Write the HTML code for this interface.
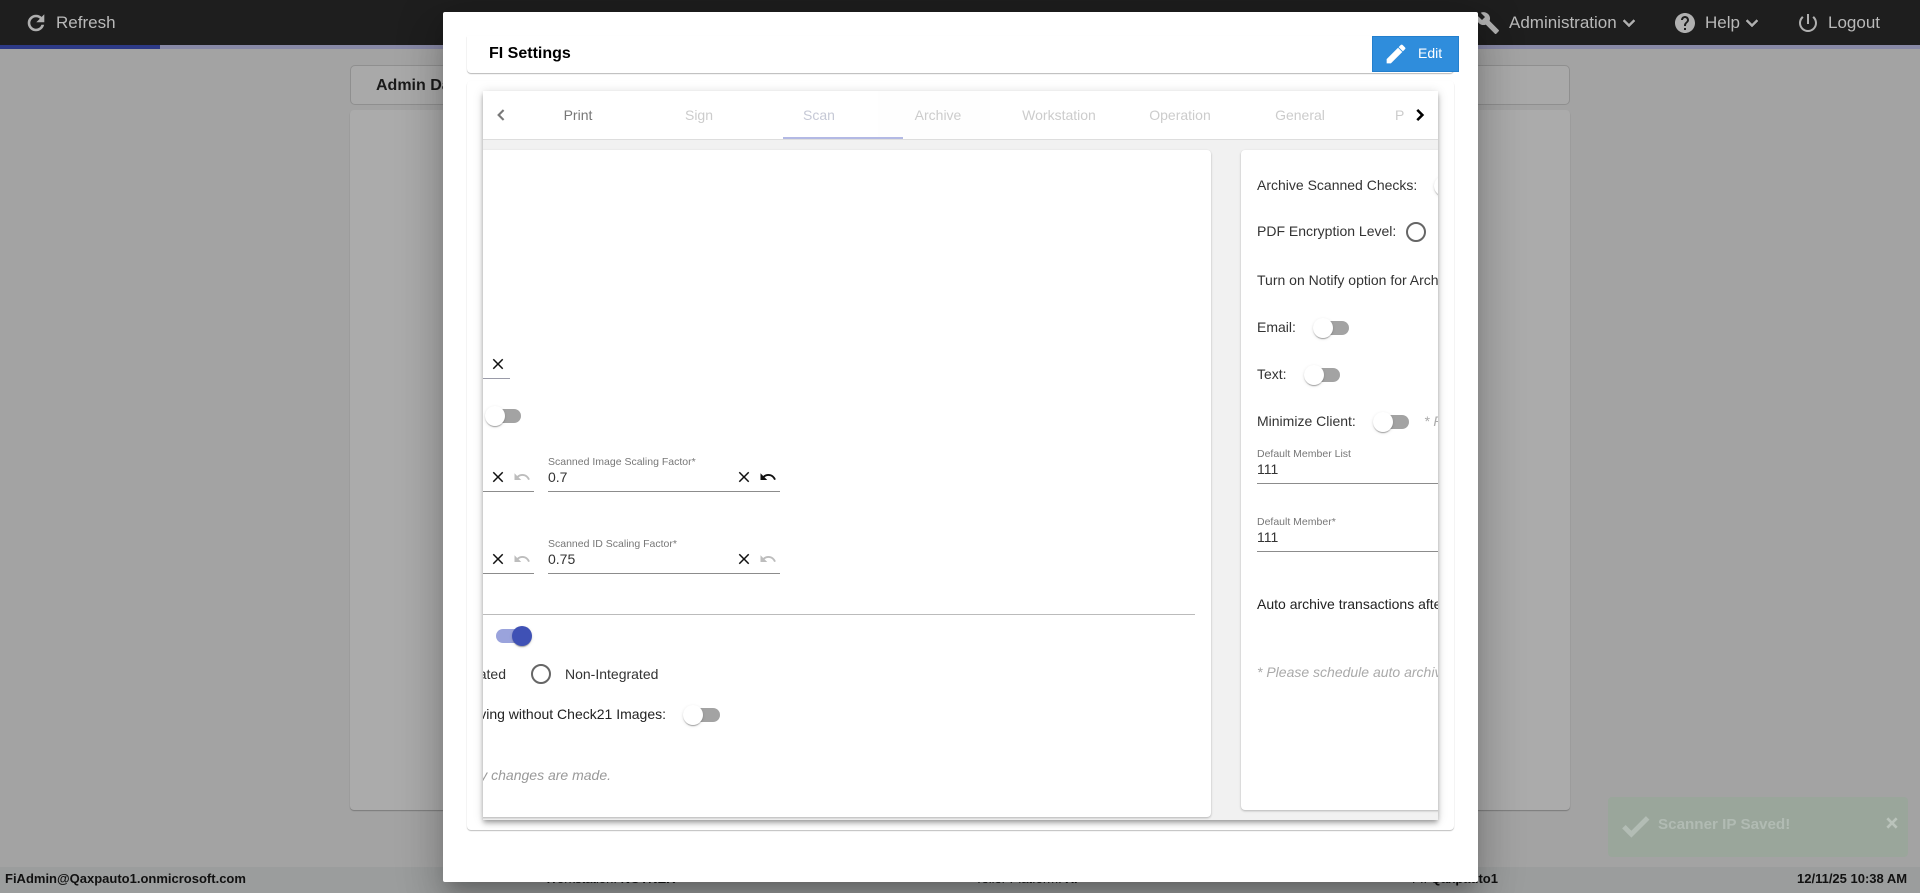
<!DOCTYPE html>
<html lang="en"><head><meta charset="utf-8"><title>FI Settings</title>
<style>
html,body{margin:0;padding:0;width:1920px;height:893px;overflow:hidden;background:#a3a3a3;font-family:"Liberation Sans",Arial,sans-serif;}
.a{position:absolute}
.t{position:absolute;white-space:nowrap;line-height:20px;font-size:14px;color:#333}
svg{position:absolute;display:block}
.tr{position:absolute;width:34px;height:14px;border-radius:7px;background:#a3a3a3}
.th{position:absolute;width:20px;height:20px;border-radius:50%;background:#fff;box-shadow:0 2px 1px -1px rgba(0,0,0,.2),0 1px 1px rgba(0,0,0,.14),0 1px 3px rgba(0,0,0,.12)}
.rd{position:absolute;width:16px;height:16px;border:2px solid #666;border-radius:50%;background:#fff}
.lb{font-size:10.5px;color:#777}
.ln{position:absolute;height:1px;background:#8c8c8c}
.tab{position:absolute;top:14px;width:120px;text-align:center;line-height:20px;font-size:14px;color:#ccc;white-space:nowrap}
.card{position:absolute;background:#fff;border-radius:4px;box-shadow:0 1px 2px rgba(0,0,0,.26),0 0 1px rgba(0,0,0,.02)}
.nav{color:#b9b9b9;font-size:17px}
.it{font-style:italic;color:#999}
.foot{font-size:13px;font-weight:bold;color:#111}
</style></head><body>

<div class="a" style="left:0;top:0;width:1920px;height:45px;background:#1e1e1e"></div>
<div class="a" style="left:0;top:45px;width:1920px;height:4px;background:#8889a6"></div>
<div class="a" style="left:0;top:45px;width:160px;height:4px;background:#2d3a87"></div>

<svg style="left:24px;top:11px" width="24" height="24" viewBox="0 0 24 24" fill="#b0b0b0" stroke="#b0b0b0" stroke-width=".6"><path d="M17.65 6.35C16.2 4.9 14.21 4 12 4c-4.42 0-7.99 3.58-7.99 8s3.57 8 7.99 8c3.73 0 6.84-2.55 7.73-6h-2.08c-.82 2.33-3.04 4-5.65 4-3.31 0-6-2.69-6-6s2.69-6 6-6c1.66 0 3.14.69 4.22 1.78L13 11h7V4l-2.35 2.35z"/></svg>
<div class="t nav" style="left:56px;top:13px">Refresh</div>

<svg style="left:1476px;top:11px" width="24" height="24" viewBox="0 0 24 24" fill="#b0b0b0"><path d="M22.7 19l-9.1-9.1c.9-2.3.4-5-1.5-6.9-2-2-5-2.4-7.4-1.3L9 6 6 9 1.6 4.7C.4 7.1.9 10.1 2.9 12.1c1.9 1.9 4.6 2.4 6.9 1.5l9.1 9.1c.4.4 1 .4 1.4 0l2.3-2.3c.5-.4.5-1.1.1-1.4z"/></svg>
<div class="t nav" style="left:1509px;top:13px">Administration</div>
<svg style="left:1617px;top:11px" width="24" height="24" viewBox="0 0 24 24" fill="#b0b0b0" stroke="#b0b0b0" stroke-width=".5"><path d="M16.59 8.59L12 13.17 7.41 8.59 6 10l6 6 6-6z"/></svg>
<svg style="left:1673px;top:11px" width="24" height="24" viewBox="0 0 24 24" fill="#b0b0b0"><path d="M12 2C6.48 2 2 6.48 2 12s4.48 10 10 10 10-4.48 10-10S17.52 2 12 2zm1 17h-2v-2h2v2zm2.07-7.75l-.9.92C13.45 12.9 13 13.5 13 15h-2v-.5c0-1.1.45-2.1 1.17-2.83l1.24-1.26c.37-.36.59-.86.59-1.41 0-1.1-.9-2-2-2s-2 .9-2 2H8c0-2.21 1.79-4 4-4s4 1.79 4 4c0 .88-.36 1.68-.93 2.25z"/></svg>
<div class="t nav" style="left:1705px;top:13px">Help</div>
<svg style="left:1740px;top:11px" width="24" height="24" viewBox="0 0 24 24" fill="#b0b0b0" stroke="#b0b0b0" stroke-width=".5"><path d="M16.59 8.59L12 13.17 7.41 8.59 6 10l6 6 6-6z"/></svg>
<svg style="left:1796px;top:11px" width="24" height="24" viewBox="0 0 24 24" fill="#b0b0b0"><path d="M13 3h-2v10h2V3zm4.83 2.17l-1.42 1.42C17.99 7.86 19 9.81 19 12c0 3.87-3.13 7-7 7s-7-3.13-7-7c0-2.19 1.01-4.14 2.58-5.42L6.17 5.17C4.23 6.82 3 9.26 3 12c0 4.97 4.03 9 9 9s9-4.03 9-9c0-2.74-1.23-5.18-3.17-6.83z"/></svg>
<div class="t nav" style="left:1828px;top:13px">Logout</div>

<!-- background cards -->
<div class="a" style="left:350px;top:65px;width:1218px;height:38px;background:#a9a9a9;border:1px solid #8f8f8f;border-radius:5px"></div>
<div class="t" style="left:376px;top:76px;font-size:16px;font-weight:bold;color:#1a1a1a">Admin Dashboard</div>
<div class="a" style="left:350px;top:110px;width:1220px;height:700px;background:#ababab;border-radius:4px;box-shadow:0 1px 1px rgba(0,0,0,.25)"></div>

<!-- toast -->
<div class="a" style="left:1608px;top:797px;width:300px;height:60px;background:#9aa69b;border-radius:4px"></div>
<svg style="left:1619px;top:810px" width="33" height="33" viewBox="0 0 24 24" fill="#b3bdb5"><path d="M9 16.17L4.83 12l-1.42 1.41L9 19 21 7l-1.41-1.41z" stroke="#b3bdb5" stroke-width="1.6"/></svg>
<div class="t" style="left:1658px;top:815px;font-size:15.2px;font-weight:bold;color:#b1bbb3">Scanner IP Saved!</div>
<svg style="left:1884px;top:815px" width="16" height="16" viewBox="0 0 24 24" fill="#bac3bb"><path d="M19 6.41L17.59 5 12 10.59 6.41 5 5 6.41 10.59 12 5 17.59 6.41 19 12 13.41 17.59 19 19 17.59 13.41 12z" stroke="#bac3bb" stroke-width="2"/></svg>

<!-- footer -->
<div class="a" style="left:0;top:867px;width:1920px;height:26px;background:#9b9d9d"></div>
<div class="t foot" style="left:5px;top:869px">FiAdmin@Qaxpauto1.onmicrosoft.com</div>
<div class="t foot" style="left:545px;top:869px"><span style="font-weight:normal">Workstation:</span> NOTNER</div>
<div class="t foot" style="left:975px;top:869px"><span style="font-weight:normal">Teller Platform:</span> XI</div>
<div class="t foot" style="left:1412px;top:869px"><span style="font-weight:normal">FI:</span> Qaxpauto1</div>
<div class="t foot" style="left:1797px;top:869px">12/11/25 10:38 AM</div>

<!-- modal -->
<div class="a" style="left:443px;top:12px;width:1035px;height:870px;background:#fff;border-radius:2px;box-shadow:0 11px 15px -7px rgba(0,0,0,.2),0 24px 38px 3px rgba(0,0,0,.14),0 9px 46px 8px rgba(0,0,0,.12)"></div>

<!-- title card -->
<div class="a" style="left:467px;top:36px;width:987px;height:37px;background:#fff;border-radius:0 0 4px 4px;box-shadow:0 1px 1px rgba(0,0,0,.28),0 0 2px rgba(0,0,0,.02)"></div>
<div class="t" style="left:489px;top:44px;font-size:16px;font-weight:bold;color:#000">FI Settings</div>
<div class="a" style="left:1372px;top:36px;width:87px;height:36px;background:#2f8ddc;box-sizing:border-box;border:1px solid #237fcd"></div>
<svg style="left:1384px;top:42px" width="24" height="24" viewBox="0 0 24 24" fill="#fff" stroke="#fff" stroke-width=".7"><path d="M3 17.25V21h3.75L17.81 9.94l-3.75-3.75L3 17.25zM20.71 7.04c.39-.39.39-1.02 0-1.41l-2.34-2.34c-.39-.39-1.02-.39-1.41 0l-1.83 1.83 3.75 3.75 1.83-1.83z"/></svg>
<div class="t" style="left:1418px;top:43px;color:#fff">Edit</div>

<!-- outer card -->
<div class="a" style="left:467px;top:81px;width:987px;height:749px;background:#fff;border-radius:4px;box-shadow:0 1px 1px rgba(0,0,0,.25),0 0 2px rgba(0,0,0,.02)"></div>

<!-- tab panel -->
<div class="a" style="left:483px;top:91px;width:955px;height:729px;background:#f1f1f1;box-shadow:0 2px 4px -1px rgba(0,0,0,.25),0 4px 5px rgba(0,0,0,.16),0 1px 10px rgba(0,0,0,.14)"></div>
<div class="a" style="left:483px;top:91px;width:955px;height:729px;overflow:hidden">
  <div class="a" style="left:0;top:0;width:955px;height:48px;background:#fff;border-bottom:1px solid #ddd"></div>
  <div class="a" style="left:395px;top:0;width:112px;height:48px;background:#fefefe"></div>
  <div class="a" style="left:300px;top:46px;width:120px;height:2px;background:#b3b9e4"></div>
  <svg style="left:7px;top:13px" width="22" height="22" viewBox="0 0 24 24" fill="#777" stroke="#777" stroke-width=".4"><path d="M15.41 7.41L14 6l-6 6 6 6 1.41-1.41L10.83 12z"/></svg>
  <div class="tab" style="left:35px;color:#777">Print</div>
  <div class="tab" style="left:156px">Sign</div>
  <div class="tab" style="left:276px;color:#c6c9d6">Scan</div>
  <div class="tab" style="left:395px">Archive</div>
  <div class="tab" style="left:516px">Workstation</div>
  <div class="tab" style="left:637px">Operation</div>
  <div class="tab" style="left:757px">General</div>
  <div class="tab" style="left:912px;width:40px;text-align:left">P</div>
  <div class="a" style="left:925px;top:0;width:30px;height:47px;background:#fff"></div>
  <svg style="left:926px;top:13px" width="22" height="22" viewBox="0 0 24 24" fill="#000"><path d="M8.59 16.59L10 18l6-6-6-6-1.41 1.41L13.17 12z" stroke="#000" stroke-width=".8"/></svg>

  <!-- page-coordinate wrapper -->
  <div class="a" style="left:-483px;top:-91px;width:1920px;height:893px">
    <!-- left card -->
    <div class="card" style="left:470px;top:150px;width:741px;height:667px"></div>

    <svg style="left:489px;top:355px" width="18" height="18" viewBox="0 0 24 24" fill="#111"><path d="M19 6.41L17.59 5 12 10.59 6.41 5 5 6.41 10.59 12 5 17.59 6.41 19 12 13.41 17.59 19 19 17.59 13.41 12z"/></svg>
    <div class="ln" style="left:470px;top:378px;width:40px;background:#9a9ba8"></div>

    <div class="tr" style="left:487px;top:409px"></div><div class="th" style="left:485px;top:406px"></div>

    <svg style="left:489px;top:468px" width="18" height="18" viewBox="0 0 24 24" fill="#111"><path d="M19 6.41L17.59 5 12 10.59 6.41 5 5 6.41 10.59 12 5 17.59 6.41 19 12 13.41 17.59 19 19 17.59 13.41 12z"/></svg>
    <svg style="left:513px;top:468px" width="18" height="18" viewBox="0 0 24 24" fill="#bdbdbd"><path d="M12.5 8c-2.65 0-5.05.99-6.9 2.6L2 7v9h9l-3.62-3.62c1.39-1.16 3.16-1.88 5.12-1.88 3.54 0 6.55 2.31 7.6 5.5l2.37-.78C21.08 11.03 17.15 8 12.5 8z"/></svg>
    <div class="ln" style="left:470px;top:491px;width:64px"></div>

    <div class="t lb" style="left:548px;top:452px">Scanned Image Scaling Factor*</div>
    <div class="t" style="left:548px;top:467px">0.7</div>
    <svg style="left:735px;top:468px" width="18" height="18" viewBox="0 0 24 24" fill="#111"><path d="M19 6.41L17.59 5 12 10.59 6.41 5 5 6.41 10.59 12 5 17.59 6.41 19 12 13.41 17.59 19 19 17.59 13.41 12z"/></svg>
    <svg style="left:759px;top:468px" width="18" height="18" viewBox="0 0 24 24" fill="#111"><path d="M12.5 8c-2.65 0-5.05.99-6.9 2.6L2 7v9h9l-3.62-3.62c1.39-1.16 3.16-1.88 5.12-1.88 3.54 0 6.55 2.31 7.6 5.5l2.37-.78C21.08 11.03 17.15 8 12.5 8z"/></svg>
    <div class="ln" style="left:548px;top:491px;width:232px"></div>

    <svg style="left:489px;top:550px" width="18" height="18" viewBox="0 0 24 24" fill="#111"><path d="M19 6.41L17.59 5 12 10.59 6.41 5 5 6.41 10.59 12 5 17.59 6.41 19 12 13.41 17.59 19 19 17.59 13.41 12z"/></svg>
    <svg style="left:513px;top:550px" width="18" height="18" viewBox="0 0 24 24" fill="#bdbdbd"><path d="M12.5 8c-2.65 0-5.05.99-6.9 2.6L2 7v9h9l-3.62-3.62c1.39-1.16 3.16-1.88 5.12-1.88 3.54 0 6.55 2.31 7.6 5.5l2.37-.78C21.08 11.03 17.15 8 12.5 8z"/></svg>
    <div class="ln" style="left:470px;top:573px;width:64px"></div>

    <div class="t lb" style="left:548px;top:534px">Scanned ID Scaling Factor*</div>
    <div class="t" style="left:548px;top:549px">0.75</div>
    <svg style="left:735px;top:550px" width="18" height="18" viewBox="0 0 24 24" fill="#111"><path d="M19 6.41L17.59 5 12 10.59 6.41 5 5 6.41 10.59 12 5 17.59 6.41 19 12 13.41 17.59 19 19 17.59 13.41 12z"/></svg>
    <svg style="left:759px;top:550px" width="18" height="18" viewBox="0 0 24 24" fill="#bdbdbd"><path d="M12.5 8c-2.65 0-5.05.99-6.9 2.6L2 7v9h9l-3.62-3.62c1.39-1.16 3.16-1.88 5.12-1.88 3.54 0 6.55 2.31 7.6 5.5l2.37-.78C21.08 11.03 17.15 8 12.5 8z"/></svg>
    <div class="ln" style="left:548px;top:573px;width:232px"></div>

    <div class="ln" style="left:470px;top:614px;width:725px;background:#bbb"></div>

    <div class="tr" style="left:496px;top:629px;background:#9aa3dc"></div>
    <div class="th" style="left:512px;top:626px;background:#3f51b5"></div>

    <div class="t" style="right:1414px;top:664px">Integrated</div>
    <div class="rd" style="left:531px;top:664px"></div>
    <div class="t" style="left:565px;top:664px">Non-Integrated</div>

    <div class="t" style="right:1254px;top:704px;color:#222">Allow Saving without Check21 Images:</div>
    <div class="tr" style="left:686px;top:708px"></div><div class="th" style="left:683px;top:705px"></div>

    <div class="t it" style="right:1309px;top:765px">Please save only when any changes are made.</div>

    <!-- right card -->
    <div class="card" style="left:1241px;top:150px;width:261px;height:660px"></div>
    <div class="t" style="left:1257px;top:175px">Archive Scanned Checks:</div>
    <div class="tr" style="left:1436px;top:179px"></div><div class="th" style="left:1434px;top:176px"></div>
    <div class="t" style="left:1257px;top:221px">PDF Encryption Level:</div>
    <div class="rd" style="left:1406px;top:222px"></div>
    <div class="t" style="left:1257px;top:270px">Turn on Notify option for Archive:</div>
    <div class="t" style="left:1257px;top:317px">Email:</div>
    <div class="tr" style="left:1315px;top:321px"></div><div class="th" style="left:1313px;top:318px"></div>
    <div class="t" style="left:1257px;top:364px">Text:</div>
    <div class="tr" style="left:1306px;top:368px"></div><div class="th" style="left:1304px;top:365px"></div>
    <div class="t" style="left:1257px;top:411px">Minimize Client:</div>
    <div class="tr" style="left:1375px;top:415px"></div><div class="th" style="left:1373px;top:412px"></div>
    <div class="t it" style="left:1424px;top:411px;color:#aaa">* Restart</div>

    <div class="t lb" style="left:1257px;top:444px">Default Member List</div>
    <div class="t" style="left:1257px;top:459px">111</div>
    <div class="ln" style="left:1257px;top:483px;width:200px"></div>
    <div class="t lb" style="left:1257px;top:512px">Default Member*</div>
    <div class="t" style="left:1257px;top:527px">111</div>
    <div class="ln" style="left:1257px;top:551px;width:200px"></div>

    <div class="t" style="left:1257px;top:594px;color:#222">Auto archive transactions after</div>
    <div class="t it" style="left:1257px;top:662px;color:#aaa">* Please schedule auto archive</div>
  </div>
</div>
</body></html>
